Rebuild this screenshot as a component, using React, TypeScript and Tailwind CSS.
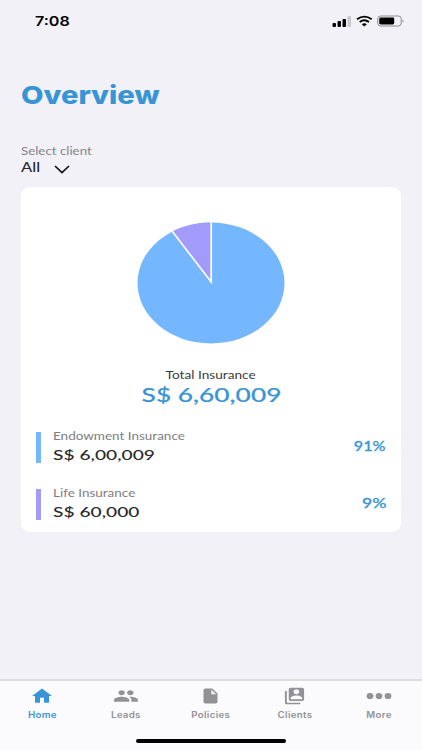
import type { ReactNode } from "react";

const BARS = [
    { label: "Endowment Insurance", amount: "S$ 6,00,009", percent: "91%", color: "bg-[#74b7fe]", percentScale: "scale-x-[1.15]" },
    { label: "Life Insurance", amount: "S$ 60,000", percent: "9%", color: "bg-[#a39bfb]", percentScale: "scale-x-[1.26]" },
];

export default function App() {
    return (
        <div className="flex h-[750px] w-[422px] flex-col overflow-hidden bg-[#f2f1f8] font-['Lato',sans-serif]">
            <StatusBar />

            <main className="flex-1 px-[21px]">
                <h1 className="mt-[37px] h-8 font-['Inter',sans-serif] text-[25px] leading-8 font-extrabold text-[#3895d5]">
                    <span className="inline-block origin-left scale-x-[1.165]">Overview</span>
                </h1>

                {/* Client filter */}
                <div className="mt-[32px] h-4 text-[11px] leading-4 text-[#858488]">
                    <span className="inline-block origin-left scale-x-[1.21]">Select client</span>
                </div>
                <div className="flex h-[18px] items-center text-[12.5px] leading-[18px] font-medium text-[#29292c]">
                    <span className="w-[33px]">
                        <span className="inline-block origin-left scale-x-[1.32]">All</span>
                    </span>
                    <svg className="mt-[2px] h-[9px] w-4" viewBox="0 0 16 9" fill="none" stroke="#111" strokeWidth="1.7">
                        <path d="M1 1l7 6.5L15 1" />
                    </svg>
                </div>

                {/* Totals */}
                <section className="mt-[10px] flex h-[345px] flex-col rounded-[9px] bg-white pt-[35px]">
                    <svg className="mx-auto h-[122px] w-[148px] shrink-0" viewBox="0 0 148 122">
                        <ellipse cx="74" cy="61" rx="73.5" ry="60.5" fill="#74b7fe" />
                        <path d="M74 61L35 9.7A73.5 60.5 0 0 1 74 .5Z" fill="#a39bfb" />
                        <path d="M74.2 0V60L35 9" fill="none" stroke="#fff" strokeWidth="1.7" />
                    </svg>
                    <div className="mt-[23px] h-4 text-center text-[10.5px] leading-4 text-[#3a3a3c]">
                        <span className="inline-block scale-x-[1.3]">Total Insurance</span>
                    </div>
                    <div className="h-6 text-center text-[19px] leading-6 font-medium text-[#3895d5]">
                        <span className="inline-block scale-x-[1.385] [-webkit-text-stroke:0.15px_#3895d5]">S$ 6,60,009</span>
                    </div>

                    <div className="mt-[24px] flex flex-col gap-[25.5px] px-[15px]">
                        {BARS.map((bar) => (
                            <div key={bar.label} className="flex h-[31px]">
                                <div className={`mt-px h-[31px] w-[5px] ${bar.color}`} />
                                <div className="ml-3 flex-1">
                                    <div className="-mt-[3px] h-4 text-[10.5px] leading-4 text-[#7e7d81]">
                                        <span className="inline-block origin-left scale-x-[1.285]">{bar.label}</span>
                                    </div>
                                    <div className="mt-px h-5 text-[13.5px] leading-5 font-medium text-[#29292c]">
                                        <span className="inline-block origin-left scale-x-[1.42]">{bar.amount}</span>
                                    </div>
                                </div>
                                <div className="mt-[5px] text-[14px] leading-5 font-medium text-[#3895d5]">
                                    <span className={`inline-block origin-right [-webkit-text-stroke:0.3px_#3895d5] ${bar.percentScale}`}>{bar.percent}</span>
                                </div>
                            </div>
                        ))}
                    </div>
                </section>
            </main>

            <TabBar />
        </div>
    );
}

function StatusBar() {
    return (
        <header className="flex h-[42px] items-center justify-between pr-[17px] pl-[35px] text-black">
            <span className="inline-block origin-left scale-x-[1.19] font-['Inter',sans-serif] text-[13.5px] leading-4 font-semibold">
                7:08
            </span>
            <svg className="h-[12px] w-[73px]" viewBox="0 0 73 12">
                <rect x="0.5" y="8" width="3.5" height="4" rx="1" />
                <rect x="5.5" y="6" width="3.5" height="6" rx="1" />
                <rect x="10.5" y="4" width="3.5" height="8" rx="1" />
                <rect x="15.5" y="1" width="3.5" height="11" rx="1" fill="#c9c8cd" />
                <g fill="none" stroke="#000" strokeWidth="1.9">
                    <path d="M25 4.2Q32.3 -1 39.7 4.2" />
                    <path d="M27.7 7Q32.3 3.6 37 7" />
                </g>
                <path d="M29.8 9.2Q32.3 7.4 34.9 9.2L32.3 11.6Z" />
                <rect x="45.7" y="1" width="23.5" height="10" rx="2.8" fill="none" stroke="#8e8d91" />
                <rect x="47.2" y="2.5" width="15" height="7" rx="1.4" />
                <path d="M70.5 4.3q2 1.7 0 3.4z" fill="#8e8d91" />
            </svg>
        </header>
    );
}

function TabBar() {
    return (
        <nav className="flex h-[71px] flex-col border-t-2 border-[#dddce2] bg-[#fbfbfd]">
            <div className="mr-px grid h-[45px] grid-cols-5">
                <Tab label="Home" icon="w-6" active>
                    <path d="M10 20v-6h4v6h5v-8h3L12 3 2 12h3v8z" />
                </Tab>
                <Tab label="Leads" icon="w-[26px]">
                    <path d="M16 11c1.66 0 2.99-1.34 2.99-3S17.66 5 16 5s-3 1.34-3 3 1.34 3 3 3zm-8 0c1.66 0 2.99-1.34 2.99-3S9.66 5 8 5 5 6.34 5 8s1.34 3 3 3zm0 2c-2.33 0-7 1.17-7 3.5V19h14v-2.5c0-2.33-4.67-3.5-7-3.5zm8 0c-.29 0-.62.02-.97.05 1.16.84 1.97 1.97 1.97 3.45V19h6v-2.5c0-2.33-4.67-3.5-7-3.5z" />
                </Tab>
                <Tab label="Policies" icon="w-[21px]">
                    <path d="M6 3a2 2 0 0 0-2 2v14c0 1.1.9 2 2 2h12a2 2 0 0 0 2-2V9l-6-6zm7 7V4.5L18.5 10z" />
                </Tab>
                <Tab label="Clients" icon="w-[23px]">
                    <path d="M4 6H2v14c0 1.1.9 2 2 2h14v-2H4V6zm16-4H8c-1.1 0-2 .9-2 2v12c0 1.1.9 2 2 2h12c1.1 0 2-.9 2-2V4c0-1.1-.9-2-2-2zm-6 2c1.66 0 3 1.34 3 3s-1.34 3-3 3-3-1.34-3-3 1.34-3 3-3zm6 12H8v-1.5c0-1.99 4-3 6-3s6 1.01 6 3V16z" />
                </Tab>
                <Tab label="More" icon="w-6">
                    <ellipse cx="3" cy="12" rx="3.4" ry="3.7" />
                    <ellipse cx="12" cy="12" rx="3.4" ry="3.7" />
                    <ellipse cx="21" cy="12" rx="3.4" ry="3.7" />
                </Tab>
            </div>
            <div className="mx-auto mt-[13px] h-[4px] w-[150px] rounded-full bg-black" />
        </nav>
    );
}

function Tab({ label, icon, active = false, children }: { label: string, icon: string, active?: boolean, children: ReactNode }) {
    return (
        <div className={`flex flex-col items-center pt-[5px] ${active ? "text-[#3895d5]" : "text-[#929196]"}`}>
            <svg className={`h-5 overflow-visible ${icon}`} viewBox="0 0 24 24" preserveAspectRatio="none" fill="currentColor">
                {children}
            </svg>
            <span className="mt-[3px] inline-block scale-x-[1.16] font-['Inter',sans-serif] text-[8.4px] leading-3 font-semibold tracking-[0.25px]">
                {label}
            </span>
        </div>
    );
}
